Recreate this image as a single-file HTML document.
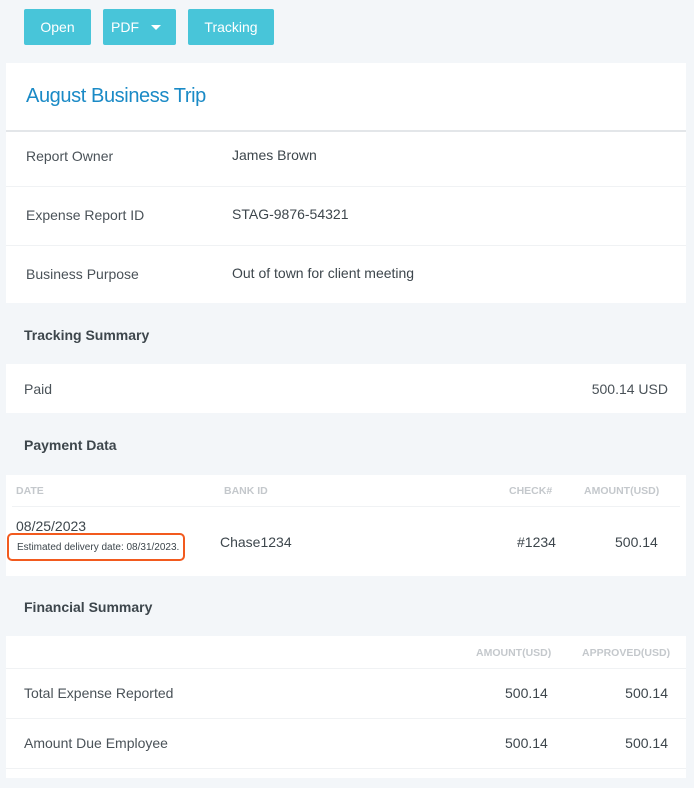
<!DOCTYPE html>
<html><head><meta charset="utf-8"><style>
*{margin:0;padding:0;box-sizing:border-box}
body{width:694px;height:788px;background:#f3f6f9;font-family:"Liberation Sans",sans-serif;color:#4a5258;position:relative;overflow:hidden}
.a{position:absolute;white-space:nowrap}
.btn{position:absolute;top:9px;height:36px;background:#48c5d9;color:#fff;font-size:14px;line-height:36px;text-align:center;border-radius:2px}
.p{position:absolute;left:6px;width:680px;background:#fff}
.l{position:absolute;height:1px;background:#f0f2f4}
.t{font-size:14px;line-height:16px}
.h{font-size:14px;font-weight:bold;color:#3d464c}
.s{font-size:10.5px;color:#c4c8cc;font-weight:bold}
</style></head><body>
<div class="btn" style="left:24px;width:67px">Open</div>
<div class="btn" style="left:103px;width:73px;text-align:left;padding-left:8px">PDF<span style="position:absolute;left:48px;top:16px;border-left:5px solid transparent;border-right:5px solid transparent;border-top:5px solid #fff"></span></div>
<div class="btn" style="left:188px;width:86px">Tracking</div>

<div class="p" style="top:63px;height:240px">
<div class="a" style="left:20px;top:22px;font-size:20px;color:#1a8ac6;letter-spacing:-0.4px">August Business Trip</div>
<div class="l" style="left:0;right:0;top:67px;height:2px;background:#e3e6e9"></div>
<div class="a t" style="left:20px;top:85px">Report Owner</div>
<div class="a t" style="left:226px;top:84px;color:#3d464c">James Brown</div>
<div class="l" style="left:0;right:0;top:123px"></div>
<div class="a t" style="left:20px;top:144px">Expense Report ID</div>
<div class="a t" style="left:226px;top:143px;color:#3d464c">STAG-9876-54321</div>
<div class="l" style="left:0;right:0;top:182px"></div>
<div class="a t" style="left:20px;top:203px">Business Purpose</div>
<div class="a t" style="left:226px;top:202px;color:#3d464c">Out of town for client meeting</div>
</div>

<div class="a h" style="left:24px;top:327px">Tracking Summary</div>
<div class="p" style="top:364px;height:49px">
<div class="a t" style="left:18px;top:17px">Paid</div>
<div class="a t" style="right:18px;top:17px">500.14 USD</div>
</div>

<div class="a h" style="left:24px;top:437px">Payment Data</div>
<div class="p" style="top:475px;height:101px">
<div class="a s" style="left:10px;top:10px">DATE</div>
<div class="a s" style="left:218px;top:10px">BANK ID</div>
<div class="a s" style="left:503px;top:10px">CHECK#</div>
<div class="a s" style="left:578px;top:10px">AMOUNT(USD)</div>
<div class="l" style="left:6px;right:6px;top:31px"></div>
<div class="a t" style="left:10px;top:43px;color:#3d464c">08/25/2023</div>
<div class="a" style="left:1px;top:58px;width:178px;height:28px;border:2px solid #f25a1e;border-radius:5px"></div>
<div class="a" style="left:11px;top:67px;font-size:10px;color:#3d464c">Estimated delivery date: 08/31/2023.</div>
<div class="a t" style="left:214px;top:59px;color:#3d464c">Chase1234</div>
<div class="a t" style="left:511px;top:59px;color:#3d464c">#1234</div>
<div class="a t" style="left:609px;top:59px;color:#3d464c">500.14</div>
</div>

<div class="a h" style="left:24px;top:599px">Financial Summary</div>
<div class="p" style="top:636px;height:142px">
<div class="a s" style="left:470px;top:11px">AMOUNT(USD)</div>
<div class="a s" style="left:576px;top:11px">APPROVED(USD)</div>
<div class="l" style="left:0;right:0;top:32px"></div>
<div class="a t" style="left:18px;top:49px">Total Expense Reported</div>
<div class="a t" style="left:499px;top:49px;color:#3d464c">500.14</div>
<div class="a t" style="right:18px;top:49px;color:#3d464c">500.14</div>
<div class="l" style="left:0;right:0;top:82px"></div>
<div class="a t" style="left:18px;top:99px">Amount Due Employee</div>
<div class="a t" style="left:499px;top:99px;color:#3d464c">500.14</div>
<div class="a t" style="right:18px;top:99px;color:#3d464c">500.14</div>
<div class="l" style="left:0;right:0;top:132px"></div>
</div>
</body></html>
